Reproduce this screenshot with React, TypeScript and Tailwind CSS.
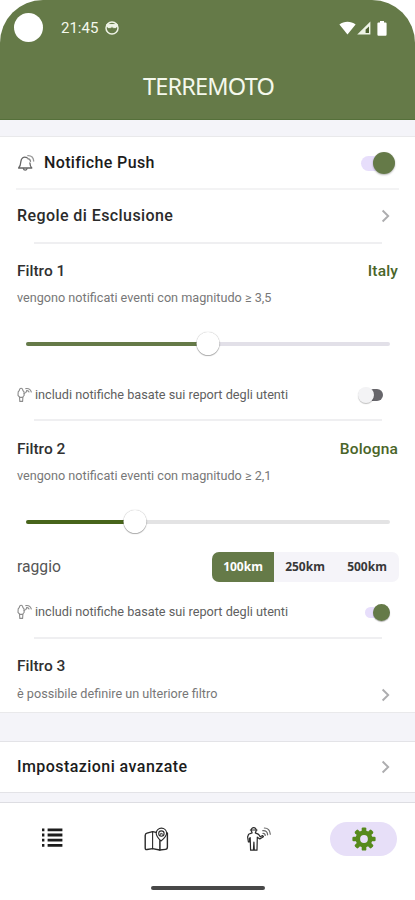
import { FC, ReactNode } from "react";

const BellIcon: FC = () => (
  <svg width="19" height="18" viewBox="0 0 19 18" fill="none" stroke="#666" strokeWidth="1.3" strokeLinecap="round" strokeLinejoin="round">
    <path d="M10 3.6 C6.6 2 4.2 4.2 3.9 7.4 C3.7 10.2 3.6 12 1.6 14 H14.8 C13.2 12.4 13 11 12.9 9" />
    <path d="M6.4 14.6 C6.8 16.7 9.6 16.7 10 14.6" />
    <path d="M10.6 4.6 C12.4 4.8 13.4 5.8 13.5 7.4" stroke="#888" />
    <path d="M10.8 1.6 C14.2 1.5 16.5 3.7 16.7 7" stroke="#999" />
  </svg>
);

const ReportIcon: FC = () => (
  <svg width="16" height="16" viewBox="0 0 16 16" fill="none" stroke="#8c8c8c" strokeWidth="1.1" strokeLinecap="round" strokeLinejoin="round">
    <path d="M2.4 3.4 C2.2 .6 6 .6 5.8 3.4 L7 4.8 L7.2 8.2 L5.9 10 L5.6 14.4 H2.8 L2.5 10 L1 8.4 L1.2 4.8 Z" />
    <path d="M2.8 10.4 H5.6" />
    <path d="M7 6.6 L9 5.4 L9.6 3.8" />
    <path d="M8.8 1.6 C11.6 1.2 13.6 2.6 14.3 5 M9.8 3.6 C10.9 3.5 11.7 4 12 5" />
  </svg>
);

const PersonIcon: FC = () => (
  <svg width="26" height="26" viewBox="0 0 26 26" fill="none" stroke="#2a2a2a" strokeWidth="1.2" strokeLinejoin="round" strokeLinecap="round">
    <path d="M5.2 4.4 C5 0.7 10.4 0.7 10.2 4.4 C10.1 5.4 9.4 6.2 9.3 6.9 L12.6 8.4 L14.3 10.8 L16.6 9.5 L17.4 10.7 L13.8 13 L11.3 11.2 L11 24.2 H8.3 L7.9 16 L7.4 24.2 H4.6 L4.2 11.6 L3.4 12.4 L3.8 15.8 L2.4 15.8 L1.6 11 L2.6 8.2 L6.1 6.9 C6 6.2 5.4 5.4 5.2 4.4 Z" />
    <path d="M4.4 4 H11" />
    <path d="M17 7.4 C18.4 7.4 19.2 8.2 19.2 9.4 M16.8 4.6 C20 4.4 21.6 6.2 21.6 8.8 M18.4 2 C22 2 24 4.6 24.3 8.2" stroke="#666" />
  </svg>
);

const ListIcon: FC = () => (
  <svg width="21" height="20" viewBox="0 0 21 20" fill="#1c1c1c">
    <path d="M0 .4h2.4v2.8H0zM0 5.6h2.4v2.8H0zM0 10.8h2.4v2.8H0zM0 16h2.4v2.8H0z" />
    <path d="M5.6 .4H20.4v2.8H5.6zM5.6 5.6H20.4v2.8H5.6zM5.6 10.8H20.4v2.8H5.6zM5.6 16H20.4v2.8H5.6z" />
  </svg>
);

const MapIcon: FC = () => (
  <svg width="25" height="25" viewBox="0 0 25 25" fill="none" stroke="#2a2a2a" strokeWidth="1.4" strokeLinejoin="round" strokeLinecap="round">
    <path d="M12.2 5.4 L8.6 4.6 L3 6.2 C1.7 6.6 1.2 7.2 1.2 8.4 V21 C1.2 22.4 2 22.8 3 22.5 L8.6 21.6 L15.6 23 L21.4 22.4 C23 22.2 23.4 21.6 23.4 20 V6" />
    <path d="M8.6 4.6 V21.6" strokeWidth="1.1" />
    <path d="M15.9 13.8 V23" strokeWidth="1.5" />
    <path d="M17 14 C14.2 11.3 12.2 9 12.2 6.2 C12.2 3.2 14.6 1.1 17.4 1.1 C20.3 1.1 22.6 3.2 22.6 6.2 C22.6 9 20.3 11.3 17 14 Z" strokeWidth="1.1" />
    <circle cx="17.4" cy="6.6" r="2.7" strokeWidth="1.1" />
    <path d="M16.6 7.8 V6.4 H18.2 V7.8" strokeWidth=".8" />
  </svg>
);

const GearIcon: FC = () => (
  <svg width="24" height="24" viewBox="-12 -12 24 24" fill="#568a1c">
    {[0, 45, 90, 135].map((angle) => (
      <rect key={angle} x="-2.3" y="-11.6" width="4.6" height="23.2" rx="1.2" transform={`rotate(${angle})`} />
    ))}
    <circle r="8.4" />
    <circle r="3.9" fill="#e7dff8" />
  </svg>
);

const Chevron: FC = () => (
  <svg width="9" height="14" viewBox="0 0 9 14" fill="none" stroke="#adadaf" strokeWidth="1.9">
    <path d="M1.6 1.5 L7.2 7 L1.6 12.5" />
  </svg>
);

const Divider: FC = () => <div className="ml-[34px] mr-[33px] h-0.5 bg-[#efeff1]" />;

const Slider: FC<{ value: number; fill: string; rail: string }> = ({ value, fill, rail }) => (
  <div className={`relative ml-[26px] mr-[25px] h-1 rounded-full ${rail}`}>
    <div className={`h-1 rounded-full ${fill}`} style={{ width: `${value}%` }} />
    <div
      className="absolute -top-[10px] size-[23px] -translate-x-1/2 rounded-full bg-white shadow-[0_1px_1px_rgba(0,0,0,0.3),0_0_1px_rgba(0,0,0,0.35)]"
      style={{ left: `${value}%` }}
    />
  </div>
);

const FilterTitle: FC<{ title: string; place?: string }> = ({ title, place }) => (
  <div className="flex h-6 items-center justify-between pl-[17px] pr-[17px] text-[15.5px] font-medium">
    <span className="text-[#303030]">{title}</span>
    <span className="tracking-[0.15px] text-[#4a6528]">{place}</span>
  </div>
);

const Sub: FC<{ children: ReactNode }> = ({ children }) => (
  <div className="h-5 pl-[17px] text-[12.65px] leading-5 text-[#777]">{children}</div>
);

const ReportRow: FC<{ children: ReactNode }> = ({ children }) => (
  <div className="flex h-6 items-center pl-[17px]">
    <ReportIcon />
    <span className="ml-0.5 flex-1 text-[12.7px] text-[#606060]">includi notifiche basate sui report degli utenti</span>
    {children}
  </div>
);

const App: FC = () => {
  return (
    <div className="flex h-[900px] w-[415px] flex-col overflow-hidden bg-white font-['Roboto',sans-serif]">
      <header className="h-[120px] rounded-t-[43px] border-b border-[#55703a] bg-[#657a48] text-[#f4f8ec]">
        <div className="flex h-14 items-center pl-[14px] pr-7">
          <div className="size-[29px] -translate-y-px rounded-full bg-white" />
          <span className="ml-[18px] w-[37px] text-[15px] leading-none">21:45</span>
          <svg className="ml-[7px]" width="14" height="14" viewBox="0 0 14 14" fill="none" stroke="#eef3e6" strokeWidth="1.5">
            <circle cx="7" cy="7" r="6" />
            <path d="M1.6 3.6 H12.4 L11 6.6 H8.4 L7 5.6 L5.6 6.6 H3 Z" fill="#eef3e6" strokeWidth="1" />
          </svg>
          <div className="ml-auto flex items-center">
            <svg width="17" height="14" viewBox="0 0 17 14" fill="#fff">
              <path d="M8.5 13.4 L.4 3.4 C5 -.2 12 -.2 16.6 3.4 Z" />
            </svg>
            <svg className="ml-px" width="14" height="14" viewBox="0 0 14 14">
              <path d="M13.4 .4 V13.6 H.2 Z" fill="#eef3e6" />
              <path d="M12 5.4 V12 H8.6 V8.6 Z" fill="#4c6130" />
            </svg>
            <svg className="ml-[6px]" width="10" height="15" viewBox="0 0 10 15" fill="#fff">
              <path d="M3 0h4v1.4H8.6Q9.6 1.4 9.6 2.6V13.6Q9.6 14.8 8.6 14.8H1.4Q.4 14.8 .4 13.6V2.6Q.4 1.4 1.4 1.4H3z" />
            </svg>
          </div>
        </div>
        <h1 className="h-[62px] pl-0.5 text-center font-['Noto_Sans',sans-serif] text-[23.5px] leading-[61px] tracking-[-0.8px]">TERREMOTO</h1>
      </header>

      <main className="flex-1 bg-[#f4f4f9] pt-4">
        <section className="h-[577px] border-y border-[#e9e9eb] bg-white">
          <div className="flex h-[51px] items-center pl-[17px] pr-5 pt-px">
            <BellIcon />
            <span className="ml-2 flex-1 text-[16px] font-medium tracking-[0.37px] text-[#1c1c1c]">Notifiche Push</span>
            <div className="flex h-[15px] w-[34px] items-center justify-end rounded-full bg-[#e7defb]">
              <div className="size-[22px] shrink-0 rounded-full bg-[#657a48] shadow-[0_1px_2px_rgba(0,0,0,0.3)]" />
            </div>
          </div>
          <div className="mx-4 h-0.5 bg-[#f3f3f4]" />
          <div className="flex h-[52px] items-center justify-between pl-[17px] pr-[25px]">
            <span className="text-[16px] font-medium tracking-[0.42px] text-[#2b2b2b]">Regole di Esclusione</span>
            <Chevron />
          </div>
          <Divider />

          <div className="h-[175px] pt-4">
            <FilterTitle title="Filtro 1" place="Italy" />
            <div className="pt-1">
              <Sub>vengono notificati eventi con magnitudo ≥ 3,5</Sub>
            </div>
            <div className="pb-[34px] pt-[34px]">
              <Slider value={50} fill="bg-[#657a48]" rail="bg-[#e2e0e8]" />
            </div>
            <div className="pt-[3px]">
              <ReportRow>
                <div className="mr-[32px] flex h-3 w-[24px] items-center rounded-full bg-[#67666b]">
                  <div className="-ml-px size-4 shrink-0 rounded-full bg-[#f3f3f5] shadow-[0_1px_1px_rgba(0,0,0,0.25)]" />
                </div>
              </ReportRow>
            </div>
          </div>
          <Divider />

          <div className="h-[216px] pt-[17px]">
            <FilterTitle title="Filtro 2" place="Bologna" />
            <div className="pt-1">
              <Sub>vengono notificati eventi con magnitudo ≥ 2,1</Sub>
            </div>
            <div className="pb-[28px] pt-[34px]">
              <Slider value={30} fill="bg-[#47641a]" rail="bg-[#e3e3e4]" />
            </div>
            <div className="flex h-[30px] items-center justify-between pl-[17px] pr-[16px]">
              <span className="text-[15.7px] text-[#555]">raggio</span>
              <div className="flex h-[30px] w-[187px] overflow-hidden rounded-[7px] bg-[#f5f4f9] font-['Noto_Sans',sans-serif] text-[12px] font-bold leading-[30px] text-[#383838]">
                <div className="w-[62px] bg-[#657a48] text-center text-white">100km</div>
                <div className="w-[62px] text-center">250km</div>
                <div className="w-[62px] text-center">500km</div>
              </div>
            </div>
            <div className="pt-[18px]">
              <ReportRow>
                <div className="mr-[25px] flex h-[11px] w-[25px] items-center justify-end rounded-full bg-[#e7defb]">
                  <div className="size-[17px] shrink-0 rounded-full bg-[#657a48] shadow-[0_1px_1px_rgba(0,0,0,0.3)]" />
                </div>
              </ReportRow>
            </div>
          </div>
          <Divider />

          <div className="pt-4">
            <FilterTitle title="Filtro 3" />
            <div className="flex items-center justify-between pr-[25px] pt-[5px]">
              <Sub>è possibile definire un ulteriore filtro</Sub>
              <div className="pt-0.5">
                <Chevron />
              </div>
            </div>
          </div>
        </section>

        <section className="mt-7 flex h-[52px] items-center justify-between border-y border-[#e3e3e7] bg-white pl-[17px] pr-[25px]">
          <span className="text-[16px] font-medium tracking-[0.44px] text-[#1c1c1c]">Impostazioni avanzate</span>
          <Chevron />
        </section>
      </main>

      <nav className="h-[98px] border-t border-[#dddde2] bg-white">
        <div className="flex h-[72px] items-center justify-between pl-[42px] pr-[18px]">
          <div className="-mt-[3px]">
            <ListIcon />
          </div>
          <div className="ml-[23px]">
            <MapIcon />
          </div>
          <div className="ml-[19px]">
            <PersonIcon />
          </div>
          <div className="flex h-[34px] w-[67px] items-center justify-center rounded-full bg-[#e7dff8]">
            <GearIcon />
          </div>
        </div>
        <div className="mx-auto mt-[11px] h-1 w-[114px] rounded-full bg-[#484848]" />
      </nav>
    </div>
  );
};

export default App;
